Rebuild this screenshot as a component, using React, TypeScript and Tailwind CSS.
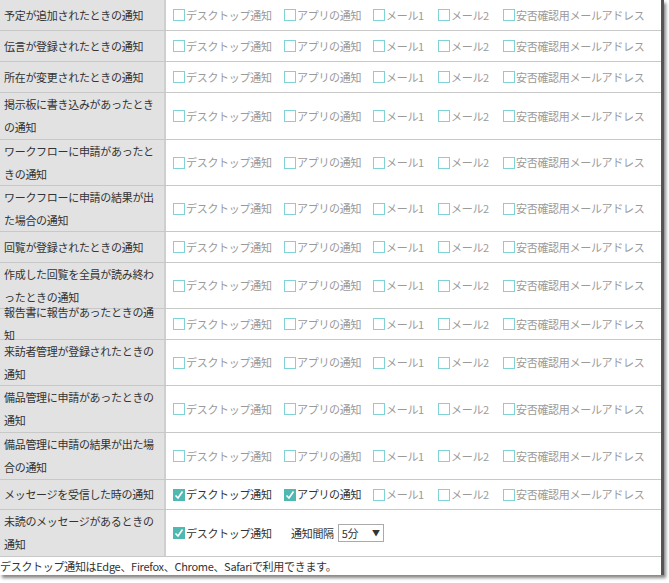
import React from "react";

const rows: [string, number][] = [
  ["予定が追加されたときの通知", 31],
  ["伝言が登録されたときの通知", 31],
  ["所在が変更されたときの通知", 31],
  ["掲示板に書き込みがあったときの通知", 47],
  ["ワークフローに申請があったときの通知", 46],
  ["ワークフローに申請の結果が出た場合の通知", 46],
  ["回覧が登録されたときの通知", 31],
  ["作成した回覧を全員が読み終わったときの通知", 46],
  ["報告書に報告があったときの通知", 31],
  ["来訪者管理が登録されたときの通知", 46],
  ["備品管理に申請があったときの通知", 47],
  ["備品管理に申請の結果が出た場合の通知", 47],
  ["メッセージを受信した時の通知", 30],
];

const opts: [string, string][] = [
  ["デスクトップ通知", "w-[111px]"],
  ["アプリの通知", "w-[89px]"],
  ["メール1", "w-[65px]"],
  ["メール2", "w-[65px]"],
  ["安否確認用メールアドレス", ""],
];

function Box({ checked }: { checked: boolean }) {
  return checked ? (
    <span className="w-[12px] h-[12px] mr-[1px] bg-[#4fb8b0] flex items-center justify-center shrink-0">
      <svg width="10" height="10" viewBox="0 0 10 10"><path d="M1.5 5.5 L4 8 L8.5 1.5" stroke="#fff" strokeWidth="1.6" fill="none" /></svg>
    </span>
  ) : (
    <span className="w-[12px] h-[12px] mr-[1px] border border-[#7fd3d6] bg-white shrink-0" />
  );
}

function Opt({ label, w, checked }: { label: string; w: string; checked: boolean }) {
  return (
    <div className={`flex items-center whitespace-nowrap ${w}`}>
      <Box checked={checked} />
      <span className={checked ? "text-[#333]" : "text-[#9a9a9a]"}>{label}</span>
    </div>
  );
}

export default function App() {
  return (
    <div className="w-[669px] h-[583px] bg-white text-[11px] tracking-[-0.3px] text-[#333]" style={{ fontFamily: '"Noto Sans CJK JP", "Liberation Sans", sans-serif' }}>
      <div className="w-[664px] border-r-[3px] border-r-[#555] shadow-[2px_3px_3px_#888]">
        {rows.map(([t, h], i) => (
          <div key={i} className="flex border-b border-[#c8c8c8]" style={{ height: h }}>
            <div className="w-[166px] shrink-0 bg-[#e2e2e2] border-r-2 border-[#cfcfcf] pl-[4px] pr-[2px] flex items-center leading-[23px]">{t}</div>
            <div className="flex items-center pl-[7px]">
              {opts.map(([l, w], j) => (
                <Opt key={j} label={l} w={w} checked={i === 12 && j < 2} />
              ))}
            </div>
          </div>
        ))}
        <div className="flex border-b border-[#c8c8c8] h-[47px]">
          <div className="w-[166px] shrink-0 bg-[#e2e2e2] border-r-2 border-[#cfcfcf] pl-[4px] pr-[2px] flex items-center leading-[23px]">未読のメッセージがあるときの通知</div>
          <div className="flex items-center pl-[7px]">
            <Opt label="デスクトップ通知" w="w-[118px]" checked />
            <span>通知間隔</span>
            <div className="ml-[4px] w-[46px] h-[18px] border border-[#aaa] flex items-center justify-between px-[3px]">
              <span>5分</span>
              <span className="text-[8px]">▼</span>
            </div>
          </div>
        </div>
        <div className="h-[18px] leading-[18px]">デスクトップ通知はEdge、Firefox、Chrome、Safariで利用できます。</div>
      </div>
    </div>
  );
}
